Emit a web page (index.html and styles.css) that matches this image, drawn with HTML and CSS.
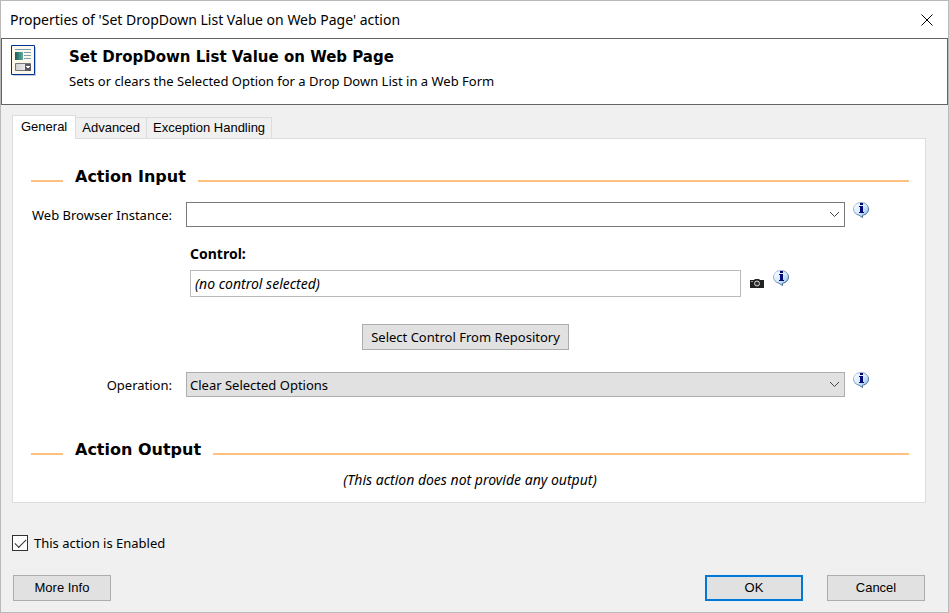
FILE: index.html
```html
<!DOCTYPE html>
<html lang="en">
<head>
<meta charset="utf-8">
<title>Properties of 'Set DropDown List Value on Web Page' action</title>
<link rel="stylesheet" href="styles.css">
</head>
<body>
<svg class="defs" aria-hidden="true">
  <defs>
    <linearGradient id="bubble" x1="0" y1="0" x2="1" y2="1">
      <stop offset="0" stop-color="#ffffff"/>
      <stop offset="0.5" stop-color="#d6ebff"/>
      <stop offset="1" stop-color="#7fb2ea"/>
    </linearGradient>
    <linearGradient id="rim" x1="0" y1="0" x2="1" y2="1">
      <stop offset="0" stop-color="#c3d0e0"/>
      <stop offset="1" stop-color="#27507f"/>
    </linearGradient>
    <linearGradient id="photo" x1="0" y1="0" x2="1" y2="0">
      <stop offset="0" stop-color="#1c5a5c"/>
      <stop offset="1" stop-color="#5fae9c"/>
    </linearGradient>
    <linearGradient id="field" x1="0" y1="0" x2="1" y2="0">
      <stop offset="0" stop-color="#d0d0d0"/>
      <stop offset="1" stop-color="#f8f8f8"/>
    </linearGradient>
    <symbol id="info" viewBox="0 0 16 16">
      <path d="M8 .5C3.700.5.500 3.300.500 7c0 3.200 2.200 5.300 5.500 6.200L9.500 15.600V13.300c3.700-.7 6-3.100 6-6.300C15.500 3.300 12.300.5 8 .5z" fill="url(#bubble)" stroke="url(#rim)"/>
      <path d="M7 1h3v2H7zM6 4h4v6h1v1H6v-1h1V5H6z" fill="#000a78"/>
    </symbol>
  </defs>
</svg>
<main class="dialog">
  <header class="titlebar">
    <h1 class="title">Properties of 'Set DropDown List Value on Web Page' action</h1>
    <button class="close" type="button" aria-label="Close">
      <svg width="12" height="12" viewBox="0 0 12 12"><path d="M.5.500l11 11M11.500.5l-11 11" stroke="#000"/></svg>
    </button>
  </header>
  <section class="banner">
    <svg class="form-icon" width="26" height="32" viewBox="0 0 26 32">
      <path d="M2 2h23v29H2z" fill="#8f9bb0" opacity=".5"/>
      <path d="M.500.500h23v29H.5z" fill="#fff9ec" stroke="#003399"/>
      <path d="M4 4h16v1H4zM13 7h7v1h-7zM13 10h7v1h-7zM13 13h7v1h-7z" fill="#7e9fb8"/>
      <path d="M4 7h8v8H4z" fill="url(#photo)"/>
      <path d="M4.500 18.500h15v7h-15z" fill="url(#field)" stroke="#777"/>
      <path d="M14 19h6v7h-6z" fill="#5b5b63"/>
      <path d="M15 21h4v1h-1v1h-2v-1h-1z" fill="#fff"/>
    </svg>
    <div>
      <h2 class="heading banner-heading">Set DropDown List Value on Web Page</h2>
      <p class="summary">Sets or clears the Selected Option for a Drop Down List in a Web Form</p>
    </div>
  </section>
  <form class="content">
    <div class="tabs" role="tablist">
      <button class="tab tab-active" type="button" role="tab" aria-selected="true">General</button>
      <button class="tab" type="button" role="tab" aria-selected="false">Advanced</button>
      <button class="tab" type="button" role="tab" aria-selected="false">Exception Handling</button>
    </div>
    <div class="panel" role="tabpanel">
      <h3 class="section heading">Action Input</h3>
      <div class="row">
        <label class="row-label" for="browser">Web Browser Instance:</label>
        <div class="combo">
          <select id="browser" class="select select-editable"><option></option></select>
          <svg class="arrow" width="11" height="7" viewBox="0 0 11 7"><path d="M1 1l4.500 4.500L10 1" fill="none" stroke="#444"/></svg>
        </div>
        <svg class="info" width="16" height="16"><use href="#info"/></svg>
      </div>
      <div class="control">
        <label class="control-label" for="control">Control:</label>
        <div class="control-line">
          <input id="control" class="control-input" type="text" value="(no control selected)" readonly>
          <svg class="camera" width="14" height="9" viewBox="0 0 14 9">
            <path d="M0 1h4l1-1h4l1 1h4v8H0z" fill="#222"/>
            <circle cx="7" cy="4.500" r="2.500" fill="#333" stroke="#ddd"/>
            <path d="M1 2h2v1H1z" fill="#999"/>
          </svg>
          <svg class="info" width="16" height="16"><use href="#info"/></svg>
        </div>
        <button class="button repository" type="button">Select Control From Repository</button>
      </div>
      <div class="row">
        <label class="row-label" for="operation">Operation:</label>
        <div class="combo">
          <select id="operation" class="select"><option>Clear Selected Options</option></select>
          <svg class="arrow" width="11" height="7" viewBox="0 0 11 7"><path d="M1 1l4.500 4.500L10 1" fill="none" stroke="#444"/></svg>
        </div>
        <svg class="info" width="16" height="16"><use href="#info"/></svg>
      </div>
      <h3 class="section section-output heading">Action Output</h3>
      <p class="note">(This action does not provide any output)</p>
    </div>
    <label class="enabled"><input class="check" type="checkbox" checked>This action is Enabled</label>
    <div class="actions">
      <button class="button action" type="button">More Info</button>
      <button class="button action action-ok" type="submit">OK</button>
      <button class="button action" type="button">Cancel</button>
    </div>
  </form>
</main>
</body>
</html>
```
FILE: styles.css
```css
* { box-sizing: border-box; }

body {
  margin: 0;
  background: #f0f0f0;
  color: #000;
  font: 13px/20px "Noto Sans", sans-serif;
}

h1, h2, h3, p { margin: 0; }
button, input, select { font: inherit; color: inherit; }
svg { display: block; flex: none; }
.defs { position: absolute; width: 0; height: 0; }

.dialog {
  min-height: 100vh;
  border: 1px solid #b9b9b9;
}

.titlebar {
  display: flex;
  align-items: center;
  justify-content: space-between;
  height: 37px;
  padding: 0 15px 0 9px;
  background: #fff;
}
.title { font: 14px/20px "Noto Sans", sans-serif; }
.close { padding: 0; border: 0; background: none; }

.banner {
  display: flex;
  gap: 32px;
  height: 67px;
  padding: 6px 9px;
  border: 1px solid #646464;
  background: #fff;
}
.heading { font: bold 16px/24px "DejaVu Sans", sans-serif; }
.banner-heading { font-size: 15px; }
.summary { margin-top: 2px; }

.content { padding: 10px 22px 11px 11px; }

.tabs {
  display: flex;
  align-items: flex-end;
}
.tab {
  height: 21px;
  padding: 0 6px;
  border: 1px solid #dcdcdc;
  border-width: 1px 1px 0 0;
  background: #f0f0f0;
  font: 13px/20px "Liberation Sans", sans-serif;
}
.tab-active {
  position: relative;
  height: 24px;
  margin-bottom: -1px;
  padding: 0 8px 2px;
  border-left-width: 1px;
  background: #fff;
}

.panel {
  padding: 26px 16px 12px 18px;
  border: 1px solid #dcdcdc;
  background: #fff;
}

.section {
  display: flex;
  gap: 12px;
}
.section::before,
.section::after {
  content: "";
  width: 32px;
  height: 2px;
  margin-top: 15px;
  background: #ffc080;
}
.section::after { flex: 1; }
.section-output { margin-top: 41px; }

.row {
  display: grid;
  grid-template-columns: 147px 1fr 56px;
  column-gap: 8px;
  align-items: center;
  margin-top: 13px;
}
.row-label { padding-right: 6px; text-align: right; }
.row .info { align-self: start; }
.combo { position: relative; }
.select {
  display: block;
  width: 100%;
  height: 25px;
  padding: 0 3px;
  border: 1px solid #adadad;
  border-radius: 0;
  background: #e1e1e1;
  appearance: none;
}
.select-editable { border-color: #7a7a7a; background: #fff; }
.arrow {
  position: absolute;
  top: 9px;
  right: 5px;
  pointer-events: none;
}

.control {
  display: grid;
  margin: 17px 168px 22px 159px;
}
.control-label { font-size: 14px; font-weight: bold; }
.control-line {
  display: flex;
  margin: 6px -48px 27px 0;
}
.control-input {
  flex: 1;
  min-width: 0;
  height: 27px;
  padding: 0 4px;
  border: 1px solid #bababa;
  background: #fff;
  font-size: 14px;
  font-style: italic;
}
.camera { margin: 9px 9px 0; }

.button {
  height: 26px;
  padding: 0 8px;
  border: 1px solid #adadad;
  background: #e1e1e1;
}
.repository { justify-self: center; }

.note {
  margin-top: 8px;
  font-size: 14px;
  font-style: italic;
  text-align: center;
}

.enabled {
  display: flex;
  align-items: center;
  gap: 6px;
  margin-top: 30px;
}
.check {
  display: grid;
  place-items: center;
  width: 16px;
  height: 16px;
  margin: 0;
  border: 1px solid #333;
  background: #fff;
  appearance: none;
}
.check:checked::before {
  content: "";
  width: 10px;
  height: 5px;
  margin-bottom: 3px;
  border: solid #333;
  border-width: 0 0 1px 1px;
  transform: rotate(-45deg);
}

.actions {
  display: flex;
  gap: 24px;
  margin: 22px 1px 0;
}
.action {
  width: 98px;
  font: 13px/20px "Liberation Sans", sans-serif;
}
.action:first-child { margin-right: auto; }
.action-ok { border: 2px solid #0078d7; }
```
